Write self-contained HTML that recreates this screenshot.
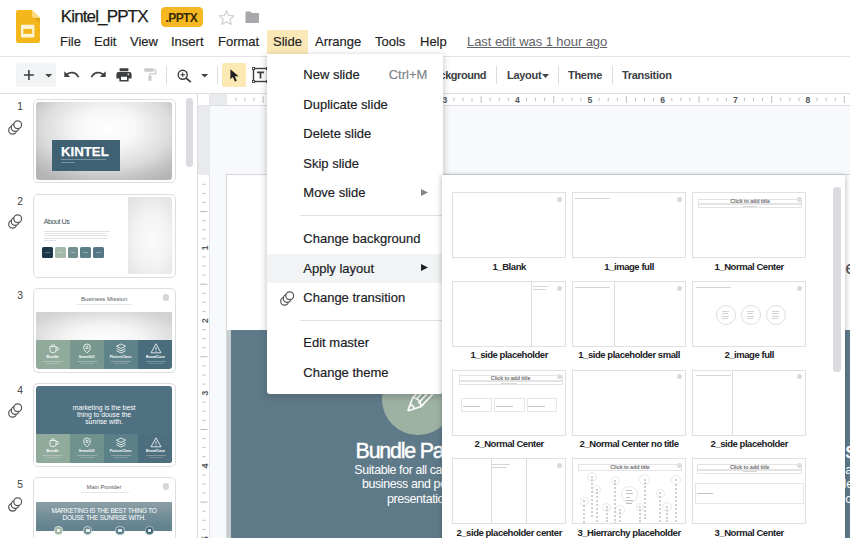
<!DOCTYPE html>
<html>
<head>
<meta charset="utf-8">
<title>Kintel_PPTX - Google Slides</title>
<style>
*{box-sizing:border-box;margin:0;padding:0}
html,body{width:850px;height:538px;overflow:hidden;background:#fff}
body{font-family:"Liberation Sans",sans-serif;color:#202124;position:relative}
.abs{position:absolute}
.t{position:absolute;white-space:nowrap;line-height:1}
/* header */
#title{left:60.8px;top:7.6px;font-size:17px;color:#1b1b1b;letter-spacing:-0.87px;-webkit-text-stroke:.25px #1b1b1b}
#badge{left:161px;top:7.3px;width:42px;height:19.5px;background:#f5b822;border-radius:4.2px}
#badge span{left:4.6px;top:4.8px;font-size:12px;font-weight:bold;color:#3a2a02;letter-spacing:-0.63px}
.mb{font-size:13px;top:35px;color:#1f1f1f;letter-spacing:0;-webkit-text-stroke:.18px #1f1f1f}
#slidehl{left:267px;top:30px;width:41px;height:24px;background:#fbe8b7}
#lastedit{left:467px;top:35px;font-size:13px;color:#5f6368;text-decoration:underline;letter-spacing:-0.06px}
#hline1{left:0;top:56px;width:850px;height:1px;background:#e3e4e6}
#hline2{left:0;top:93px;width:850px;height:1px;background:#dcdee1}
/* toolbar */
#plusbg{left:16px;top:63px;width:40px;height:24px;background:#f1f3f4;border-radius:2px}
#curbg{left:222px;top:63px;width:24px;height:24px;background:#fce8b2;border-radius:2px}
.tb{font-size:11px;font-weight:bold;top:69.5px;color:#3c4043;letter-spacing:-0.3px}
.vsep{width:1px;height:18px;top:66px;background:#dadce0}
/* filmstrip */
#film{left:0;top:94px;width:197px;height:444px;background:#fff}
#filmborder{left:197px;top:94px;width:1px;height:444px;background:#dadce0}
.num{font-size:10.3px;color:#3c4043;left:11px;width:12px;text-align:right}
.thumb{left:32.8px;width:142.8px;height:84.2px;border:1.4px solid #dcdee1;border-radius:5px;background:#fff;overflow:hidden}
.thumb .in{position:absolute;left:1.8px;top:2.1px;width:136.6px;height:77.3px;border-radius:3px;overflow:hidden}
#fscroll{left:186px;top:97.5px;width:7px;height:69.5px;background:#dadce0;border-radius:4px}
/* canvas */
#canvas{left:198px;top:94px;width:652px;height:444px;background:#f8f9fa}
#slide{left:227px;top:175.3px;width:640px;height:380px;background:#fff;box-shadow:0 0 0 1px #d6d8db;overflow:hidden}
#slideimg{left:0;top:154.7px;width:640px;height:230px;background:#5e7988;border-left:4px solid #c8cdcf}
#hruler{left:198px;top:93px;width:652px;height:13px;background:#fff;border-top:1px solid #dcdee1;border-bottom:1px solid #dcdee1}
#hrgrey{left:210px;top:94px;width:17px;height:11px;background:#e8eaed}
#vruler{left:198px;top:94px;width:12px;height:444px;background:#fff;border-right:1px solid #e3e5e8}
#vrgrey{left:198px;top:106px;width:11px;height:69.3px;background:#e8eaed}
#rcorner{left:198px;top:94px;width:12px;height:11.5px;background:#fff;border-right:1px solid #e3e5e8;border-bottom:1px solid #e3e5e8}
/* menu */
#menu{left:267px;top:54px;width:176px;height:340px;background:#fff;box-shadow:0 2px 6px 1px rgba(60,64,67,.28);border-radius:0 0 3px 3px}
.mi{font-size:13px;color:#202124;left:36.3px;letter-spacing:0;-webkit-text-stroke:.18px currentColor}
.msep{left:8px;width:168px;height:1px;background:#e1e3e6}
#sub{left:442.2px;top:175.3px;width:402.8px;height:380px;background:#fff;box-shadow:0 1px 5px 1px rgba(60,64,67,.3);border-radius:2px;overflow:hidden}
.lay{width:114.3px;height:65.8px;border:1px solid #e0e0e0;background:#fff;overflow:hidden}
.ll{font-size:9.5px;font-weight:bold;color:#202124;text-align:center;width:140px;letter-spacing:-0.45px}
</style>
</head>
<body>

<!-- ============ HEADER ============ -->
<svg class="abs" style="left:15.8px;top:10.1px" width="24" height="33" viewBox="0 0 24 33">
  <path d="M2.2 0 H16 L24 8 V30.8 a2.2 2.2 0 0 1 -2.2 2.2 H2.2 a2.2 2.2 0 0 1 -2.2 -2.2 V2.2 a2.2 2.2 0 0 1 2.2 -2.2z" fill="#f4b71b"/>
  <path d="M16.4 7.6 L24 12.4 V8z" fill="#d9a013" opacity=".75"/>
  <path d="M16 0 L24 8 H18 a2 2 0 0 1 -2 -2z" fill="#f9da80"/>
  <rect x="5" y="14.7" width="13.4" height="12.9" rx=".8" fill="#fdf4d6"/>
  <rect x="7.3" y="18.9" width="8.9" height="4.9" fill="#f4b71b"/>
</svg>
<div class="t" id="title">Kintel_PPTX</div>
<div class="abs" id="badge"><span class="t">.PPTX</span></div>
<svg class="abs" style="left:216.6px;top:7.8px" width="19.2" height="19.2" viewBox="0 0 24 24"><path d="M12 3.2l2.7 6 6.5.6-4.9 4.3 1.5 6.4L12 17.1l-5.8 3.4 1.5-6.4-4.9-4.3 6.5-.6z" fill="none" stroke="#cfd1d3" stroke-width="1.5" stroke-linejoin="round"/></svg>
<svg class="abs" style="left:244.9px;top:11.3px" width="14.5" height="12.4" viewBox="0 0 16 13" preserveAspectRatio="none"><path d="M1.5 0.5 H6 L7.6 2.2 H14.5 a1 1 0 0 1 1 1 V11.5 a1 1 0 0 1 -1 1 H1.5 a1 1 0 0 1 -1 -1 V1.5 a1 1 0 0 1 1 -1z" fill="#a6a8ab"/></svg>

<div class="abs" id="slidehl"></div>
<div class="t mb" style="left:60px">File</div>
<div class="t mb" style="left:94px">Edit</div>
<div class="t mb" style="left:130px">View</div>
<div class="t mb" style="left:171px">Insert</div>
<div class="t mb" style="left:218px">Format</div>
<div class="t mb" style="left:273px">Slide</div>
<div class="t mb" style="left:315px">Arrange</div>
<div class="t mb" style="left:375px">Tools</div>
<div class="t mb" style="left:420px">Help</div>
<div class="t" id="lastedit">Last edit was 1 hour ago</div>
<div class="abs" id="hline1"></div>

<!-- ============ TOOLBAR ============ -->
<div id="toolbar">
<div class="abs" id="plusbg"></div>
<div class="abs" id="curbg"></div>
<!-- plus -->
<svg class="abs" style="left:23px;top:69px" width="12" height="12" viewBox="0 0 12 12"><path d="M5.9 1 V10.9 M.9 6 H10.8" stroke="#3c4043" stroke-width="1.6" fill="none"/></svg>
<svg class="abs" style="left:45.3px;top:74.1px" width="7.4" height="3.6" viewBox="0 0 8 4"><path d="M0 0 H8 L4 4z" fill="#444746"/></svg>
<!-- undo -->
<svg class="abs" style="left:64px;top:70px" width="16" height="10" viewBox="0 0 16 10"><path d="M0.3 1.2 V7 H6.1 L3.9 4.8 C5 3.9 6.4 3.4 7.9 3.4 C10.6 3.4 12.9 5.1 13.7 7.6 L15.3 7.1 C14.3 3.9 11.4 1.7 7.9 1.7 C5.9 1.7 4.1 2.4 2.7 3.6z" fill="#3c4043"/></svg>
<!-- redo -->
<svg class="abs" style="left:90px;top:70px" width="16" height="10" viewBox="0 0 16 10"><path d="M15.7 1.2 V7 H9.9 L12.1 4.8 C11 3.9 9.6 3.4 8.1 3.4 C5.4 3.4 3.1 5.1 2.3 7.6 L0.7 7.1 C1.7 3.9 4.6 1.7 8.1 1.7 C10.1 1.7 11.9 2.4 13.3 3.6z" fill="#3c4043"/></svg>
<!-- print -->
<svg class="abs" style="left:116px;top:68px" width="16" height="14" viewBox="0 0 16 14"><path d="M3.6 0.3 H12.4 V3.2 H3.6z M2.6 4 H13.4 A2.2 2.2 0 0 1 15.6 6.2 V10.6 H12.6 V13.6 H3.4 V10.6 H0.4 V6.2 A2.2 2.2 0 0 1 2.6 4z M5 8.8 V12.1 H11 V8.8z M12.3 5.4 a.8 .8 0 1 0 0.01 0z" fill="#3c4043" fill-rule="evenodd"/></svg>
<!-- paint format (disabled) -->
<svg class="abs" style="left:144px;top:68px" width="13" height="13" viewBox="0 0 13 13"><path d="M0.3 0.2 H9.6 V3.8 H0.3z M9.6 1.3 H12.3 V6.6 H6.6 V8 H7.6 V12.8 H4.4 V8 H5.3 V5.3 H11 V2.6 H9.6z" fill="#c9cbce"/></svg>
<div class="abs vsep" style="left:166px"></div>
<!-- zoom -->
<svg class="abs" style="left:177px;top:69px" width="15" height="14" viewBox="0 0 15 14"><circle cx="5.7" cy="5.7" r="4.5" fill="none" stroke="#3c4043" stroke-width="1.4"/><path d="M9 9 L13.8 13.2" stroke="#3c4043" stroke-width="1.7" fill="none"/><path d="M5.7 3.4 V8 M3.4 5.7 H8" stroke="#3c4043" stroke-width="1.1" fill="none"/></svg>
<svg class="abs" style="left:201.2px;top:74.1px" width="7.4" height="3.6" viewBox="0 0 8 4"><path d="M0 0 H8 L4 4z" fill="#444746"/></svg>
<div class="abs vsep" style="left:217px"></div>
<!-- cursor -->
<svg class="abs" style="left:230px;top:69px" width="10" height="13" viewBox="0 0 10 13"><path d="M0.4 0.2 V10.3 L2.9 7.9 L4.9 12.6 L6.8 11.8 L4.8 7.2 H8.6z" fill="#1f1f1f"/></svg>
<!-- textbox -->
<svg class="abs" style="left:252px;top:67px" width="17" height="16" viewBox="0 0 17 16"><rect x="1.5" y="1.5" width="14" height="13" fill="#fff" stroke="#3c4043" stroke-width="1.4"/><path d="M5 4.6 H12 V6.2 H9.4 V11.6 H7.6 V6.2 H5z" fill="#3c4043"/><g fill="#fff" stroke="#3c4043" stroke-width=".9"><rect x=".4" y=".4" width="2.2" height="2.2"/><rect x="14.4" y=".4" width="2.2" height="2.2"/><rect x=".4" y="13.4" width="2.2" height="2.2"/><rect x="14.4" y="13.4" width="2.2" height="2.2"/></g></svg>
<!-- right side buttons -->
<div class="t tb" style="left:426.3px;letter-spacing:-0.45px">Background</div>
<div class="abs vsep" style="left:496px"></div>
<div class="t tb" style="left:507px">Layout</div>
<svg class="abs" style="left:542px;top:74px" width="7" height="4" viewBox="0 0 7 4"><path d="M0 0 H7 L3.5 4z" fill="#444746"/></svg>
<div class="abs vsep" style="left:558px"></div>
<div class="t tb" style="left:568px">Theme</div>
<div class="abs vsep" style="left:612px"></div>
<div class="t tb" style="left:622px">Transition</div>
</div>
<div class="abs" id="hline2"></div>

<!-- ============ FILMSTRIP ============ -->
<div class="abs" id="film">
<div class="t num" style="top:7.9px">1</div>
<svg class="abs" style="left:7.7px;top:26.1px" width="15" height="15" viewBox="0 0 15 15"><g fill="#fff" stroke="#55585b" stroke-width="1.25"><circle cx="4.6" cy="10.2" r="3.9"/><circle cx="7.15" cy="7.5" r="3.9"/><circle cx="9.7" cy="4.8" r="3.9"/></g></svg>
<div class="t num" style="top:102.5px">2</div>
<svg class="abs" style="left:7.7px;top:120.2px" width="15" height="15" viewBox="0 0 15 15"><g fill="#fff" stroke="#55585b" stroke-width="1.25"><circle cx="4.6" cy="10.2" r="3.9"/><circle cx="7.15" cy="7.5" r="3.9"/><circle cx="9.7" cy="4.8" r="3.9"/></g></svg>
<div class="t num" style="top:197.0px">3</div>
<div class="t num" style="top:291.6px">4</div>
<svg class="abs" style="left:7.7px;top:309.2px" width="15" height="15" viewBox="0 0 15 15"><g fill="#fff" stroke="#55585b" stroke-width="1.25"><circle cx="4.6" cy="10.2" r="3.9"/><circle cx="7.15" cy="7.5" r="3.9"/><circle cx="9.7" cy="4.8" r="3.9"/></g></svg>
<div class="t num" style="top:385.5px">5</div>
<svg class="abs" style="left:7.7px;top:403.2px" width="15" height="15" viewBox="0 0 15 15"><g fill="#fff" stroke="#55585b" stroke-width="1.25"><circle cx="4.6" cy="10.2" r="3.9"/><circle cx="7.15" cy="7.5" r="3.9"/><circle cx="9.7" cy="4.8" r="3.9"/></g></svg>
<div class="abs thumb" style="top:5.299999999999997px"><div class="in" style="background:radial-gradient(ellipse 72% 78% at 52% 34%,#ffffff 0%,#f7f7f7 30%,#dcdcdc 65%,#c2c2c2 85%,#b4b4b4 100%)"><div class="abs" style="left:16.9px;top:37.9px;width:67.8px;height:30.3px;background:#3e6174"></div><div class="t" style="left:25.3px;top:42.2px;font-size:13.2px;font-weight:bold;color:#fff;letter-spacing:0.05px;-webkit-text-stroke:.25px #fff">KINTEL</div><div class="abs" style="left:25.6px;top:56.8px;width:45px;height:.8px;background:rgba(255,255,255,.32)"></div><div class="abs" style="left:25.6px;top:59.2px;width:14px;height:.8px;background:rgba(255,255,255,.32)"></div></div></div>
<div class="abs thumb" style="top:99.9px"><div class="in" style="background:#fff"><div class="abs" style="left:92.2px;top:0;width:44.4px;height:78px;background:radial-gradient(ellipse 75% 65% at 55% 55%,#fbfbfb 0%,#f3f3f3 50%,#e4e3e3 100%)"></div><div class="t" style="left:8.2px;top:20.6px;font-size:7.2px;color:#3b4a55;letter-spacing:-0.5px">About Us</div><div class="abs" style="left:8.2px;top:33.60px;width:66px;height:.8px;background:#e1e3e6"></div><div class="abs" style="left:8.2px;top:36.05px;width:62px;height:.8px;background:#e1e3e6"></div><div class="abs" style="left:8.2px;top:38.50px;width:64px;height:.8px;background:#e1e3e6"></div><div class="abs" style="left:8.2px;top:40.95px;width:63px;height:.8px;background:#e1e3e6"></div><div class="abs" style="left:8.2px;top:43.40px;width:12px;height:.8px;background:#e1e3e6"></div><div class="abs" style="left:6.8px;top:50.4px;width:10.8px;height:10.6px;border-radius:1.5px;background:#1d3949"></div><div class="abs" style="left:9.8px;top:55px;width:4.8px;height:.7px;background:rgba(255,255,255,.3)"></div><div class="abs" style="left:19.4px;top:50.4px;width:10.8px;height:10.6px;border-radius:1.5px;background:#a4b9a9"></div><div class="abs" style="left:22.4px;top:55px;width:4.8px;height:.7px;background:rgba(255,255,255,.3)"></div><div class="abs" style="left:32.0px;top:50.4px;width:10.8px;height:10.6px;border-radius:1.5px;background:#708f8e"></div><div class="abs" style="left:35.0px;top:55px;width:4.8px;height:.7px;background:rgba(255,255,255,.3)"></div><div class="abs" style="left:44.6px;top:50.4px;width:10.8px;height:10.6px;border-radius:1.5px;background:#5b8088"></div><div class="abs" style="left:47.6px;top:55px;width:4.8px;height:.7px;background:rgba(255,255,255,.3)"></div><div class="abs" style="left:57.2px;top:50.4px;width:10.8px;height:10.6px;border-radius:1.5px;background:#557786"></div><div class="abs" style="left:60.2px;top:55px;width:4.8px;height:.7px;background:rgba(255,255,255,.3)"></div></div></div>
<div class="abs thumb" style="top:194.39999999999998px"><div class="in" style="background:#fff"><div class="t" style="left:0;width:137px;text-align:center;top:4.9px;font-size:6px;color:#5a5a5a;letter-spacing:0">Business Mission</div><div class="abs" style="left:41.6px;top:12.8px;width:55px;height:.7px;background:#e6e6e6"></div><div class="abs" style="left:127px;top:2.4px;width:6.8px;height:6.8px;border-radius:50%;background:#d6d6d6"></div><div class="abs" style="left:0;top:20.5px;width:137px;height:28.4px;background:radial-gradient(ellipse 62% 120% at 50% 100%,#ffffff 0%,#f4f4f4 45%,#d2d2d2 100%)"></div><div class="abs" style="left:0px;top:48.7px;width:34.4px;height:29.5px;background:#90aa9b"></div>
<div class="abs" style="left:34.1px;top:48.7px;width:34.4px;height:29.5px;background:#78988f"></div>
<div class="abs" style="left:68.2px;top:48.7px;width:34.9px;height:29.5px;background:#5f838a"></div>
<div class="abs" style="left:102.8px;top:48.7px;width:34.0px;height:29.5px;background:#4a6d7e"></div>
<svg class="abs" style="left:0;top:48.7px" width="137" height="28" viewBox="0 0 137 28" fill="none" stroke="#fff" stroke-width=".8"><path d="M14 6.5 h6 v4 a2 2 0 0 1 -2 2 h-2 a2 2 0 0 1 -2 -2z M20 7.5 h1.3 a1.3 1.3 0 0 1 0 2.6 H20 M15 5 h4"/><path d="M51 4 a3.4 3.4 0 0 1 3.4 3.4 c0 2.4 -3.4 5.6 -3.4 5.6 s-3.4 -3.2 -3.4 -5.6 A3.4 3.4 0 0 1 51 4z"/><circle cx="51" cy="7.4" r="1.2"/><path d="M85 4 l4.5 2.2 l-4.5 2.2 l-4.5 -2.2z M80.5 8.6 l4.5 2.2 l4.5 -2.2 M80.5 10.8 l4.5 2.2 l4.5 -2.2"/><path d="M120 3.8 l5 9 h-10z M120 7 v3.2 M120 11 v.8"/></svg>
<div class="t" style="left:-3px;width:40px;text-align:center;top:64.2px;font-size:3.6px;font-weight:bold;color:#fff">Bundle</div>
<div class="abs" style="left:7px;width:20px;top:69.2px;height:.6px;background:rgba(255,255,255,.28)"></div>
<div class="abs" style="left:10px;width:14px;top:71.2px;height:.6px;background:rgba(255,255,255,.2)"></div>
<div class="t" style="left:31px;width:40px;text-align:center;top:64.2px;font-size:3.6px;font-weight:bold;color:#fff">SearchUI</div>
<div class="abs" style="left:41px;width:20px;top:69.2px;height:.6px;background:rgba(255,255,255,.28)"></div>
<div class="abs" style="left:44px;width:14px;top:71.2px;height:.6px;background:rgba(255,255,255,.2)"></div>
<div class="t" style="left:65px;width:40px;text-align:center;top:64.2px;font-size:3.6px;font-weight:bold;color:#fff">PictureClass</div>
<div class="abs" style="left:75px;width:20px;top:69.2px;height:.6px;background:rgba(255,255,255,.28)"></div>
<div class="abs" style="left:78px;width:14px;top:71.2px;height:.6px;background:rgba(255,255,255,.2)"></div>
<div class="t" style="left:100px;width:40px;text-align:center;top:64.2px;font-size:3.6px;font-weight:bold;color:#fff">BroadCase</div>
<div class="abs" style="left:110px;width:20px;top:69.2px;height:.6px;background:rgba(255,255,255,.28)"></div>
<div class="abs" style="left:113px;width:14px;top:71.2px;height:.6px;background:rgba(255,255,255,.2)"></div>
</div></div>
<div class="abs thumb" style="top:289.0px"><div class="in" style="background:#4f7182"><div class="t" style="left:0;width:137px;text-align:center;top:19.0px;font-size:6.8px;color:#fff;letter-spacing:0px">marketing is the best</div><div class="t" style="left:0;width:137px;text-align:center;top:25.8px;font-size:6.8px;color:#fff;letter-spacing:0px">thing to douse the</div><div class="t" style="left:0;width:137px;text-align:center;top:32.5px;font-size:6.8px;color:#fff;letter-spacing:0px">sunrise with.</div><div class="abs" style="left:0px;top:48.2px;width:34.4px;height:30px;background:#90aa9b"></div>
<div class="abs" style="left:34.1px;top:48.2px;width:34.4px;height:30px;background:#70928f"></div>
<div class="abs" style="left:68.2px;top:48.2px;width:34.9px;height:30px;background:#5c8088"></div>
<div class="abs" style="left:102.8px;top:48.2px;width:34.0px;height:30px;background:#4c6e7f"></div>
<svg class="abs" style="left:0;top:48.2px" width="137" height="28" viewBox="0 0 137 28" fill="none" stroke="#fff" stroke-width=".8"><path d="M14 6.5 h6 v4 a2 2 0 0 1 -2 2 h-2 a2 2 0 0 1 -2 -2z M20 7.5 h1.3 a1.3 1.3 0 0 1 0 2.6 H20 M15 5 h4"/><path d="M51 4 a3.4 3.4 0 0 1 3.4 3.4 c0 2.4 -3.4 5.6 -3.4 5.6 s-3.4 -3.2 -3.4 -5.6 A3.4 3.4 0 0 1 51 4z"/><circle cx="51" cy="7.4" r="1.2"/><path d="M85 4 l4.5 2.2 l-4.5 2.2 l-4.5 -2.2z M80.5 8.6 l4.5 2.2 l4.5 -2.2 M80.5 10.8 l4.5 2.2 l4.5 -2.2"/><path d="M120 3.8 l5 9 h-10z M120 7 v3.2 M120 11 v.8"/></svg>
<div class="t" style="left:-3px;width:40px;text-align:center;top:63.7px;font-size:3.6px;font-weight:bold;color:#fff">Bundle</div>
<div class="abs" style="left:7px;width:20px;top:68.7px;height:.6px;background:rgba(255,255,255,.28)"></div>
<div class="abs" style="left:10px;width:14px;top:70.7px;height:.6px;background:rgba(255,255,255,.2)"></div>
<div class="t" style="left:31px;width:40px;text-align:center;top:63.7px;font-size:3.6px;font-weight:bold;color:#fff">SearchUI</div>
<div class="abs" style="left:41px;width:20px;top:68.7px;height:.6px;background:rgba(255,255,255,.28)"></div>
<div class="abs" style="left:44px;width:14px;top:70.7px;height:.6px;background:rgba(255,255,255,.2)"></div>
<div class="t" style="left:65px;width:40px;text-align:center;top:63.7px;font-size:3.6px;font-weight:bold;color:#fff">PictureClass</div>
<div class="abs" style="left:75px;width:20px;top:68.7px;height:.6px;background:rgba(255,255,255,.28)"></div>
<div class="abs" style="left:78px;width:14px;top:70.7px;height:.6px;background:rgba(255,255,255,.2)"></div>
<div class="t" style="left:100px;width:40px;text-align:center;top:63.7px;font-size:3.6px;font-weight:bold;color:#fff">BroadCase</div>
<div class="abs" style="left:110px;width:20px;top:68.7px;height:.6px;background:rgba(255,255,255,.28)"></div>
<div class="abs" style="left:113px;width:14px;top:70.7px;height:.6px;background:rgba(255,255,255,.2)"></div>
</div></div>
<div class="abs thumb" style="top:382.9px"><div class="in" style="background:#fff"><div class="t" style="left:0;width:137px;text-align:center;top:5.3px;font-size:5.6px;color:#555;letter-spacing:0">Main Provider</div><div class="abs" style="left:45px;top:12px;width:48px;height:.7px;background:#e6e6e6"></div><div class="abs" style="left:127px;top:2.8px;width:6.8px;height:6.8px;border-radius:50%;background:#d6d6d6"></div><div class="abs" style="left:0;top:22.3px;width:137px;height:29.2px;background:linear-gradient(#8da0a7,#6f8b97 55%,#5f808d)"></div><div class="t" style="left:0;width:137px;text-align:center;top:28.3px;font-size:6.5px;color:#fff;letter-spacing:-0.25px">MARKETING IS THE BEST THING TO</div><div class="t" style="left:0;width:137px;text-align:center;top:35.1px;font-size:6.5px;color:#fff;letter-spacing:-0.25px">DOUSE THE SUNRISE WITH.</div><div class="abs" style="left:18.1px;top:45.9px;width:9.4px;height:9.4px;border-radius:50%;background:#9db6a2;border:.6px solid rgba(255,255,255,.5)"></div><div class="abs" style="left:21.0px;top:49px;width:3.6px;height:3px;border-radius:.6px;background:rgba(255,255,255,.85)"></div><div class="abs" style="left:47.5px;top:45.9px;width:9.4px;height:9.4px;border-radius:50%;background:#708f8f;border:.6px solid rgba(255,255,255,.5)"></div><div class="abs" style="left:50.4px;top:49px;width:3.6px;height:3px;border-radius:.6px;background:rgba(255,255,255,.85)"></div><div class="abs" style="left:79.8px;top:45.9px;width:9.4px;height:9.4px;border-radius:50%;background:#587d89;border:.6px solid rgba(255,255,255,.5)"></div><div class="abs" style="left:82.7px;top:49px;width:3.6px;height:3px;border-radius:.6px;background:rgba(255,255,255,.85)"></div><div class="abs" style="left:109.2px;top:45.9px;width:9.4px;height:9.4px;border-radius:50%;background:#3f6577;border:.6px solid rgba(255,255,255,.5)"></div><div class="abs" style="left:112.1px;top:49px;width:3.6px;height:3px;border-radius:.6px;background:rgba(255,255,255,.85)"></div></div></div>
</div>
<div class="abs" id="filmborder"></div>
<div class="abs" id="fscroll"></div>

<!-- ============ CANVAS ============ -->
<div class="abs" id="canvas"></div>
<div class="abs" id="slide"><div class="abs" id="slideimg"></div>
<div class="abs" style="left:155.2px;top:188.3px;width:71.6px;height:71.6px;border-radius:50%;background:#9db2a2"></div>
<svg class="abs" style="left:173px;top:209.7px" width="50" height="30" viewBox="400 385 50 30" fill="none" stroke="#fff" stroke-width="1.55" stroke-linejoin="round" stroke-linecap="round"><path d="M433.3 375.7 L412.8 397.6 L408.3 409.40000000000003 Q407.7 410.90000000000003 409.4 410.5 L421 406.6 L441.5 384.7 M412.8 397.6 Q420.5 398.6 421 406.6 M410.2 404.8 Q413.4 405.4 414.4 408.8 M416.4 399.0 L436.9 377.1 M418.9 402.6 L439.4 380.7"/></svg>
<div class="t" style="left:128.6px;top:265.8px;font-size:21.4px;color:#fff;-webkit-text-stroke:.45px #fff;letter-spacing:-1.2px">Bundle Package</div>
<div class="t" style="left:127.3px;top:288.4px;font-size:12.4px;color:#fff;letter-spacing:-0.38px">Suitable for all category</div>
<div class="t" style="left:135.0px;top:303.0px;font-size:12.4px;color:#fff;letter-spacing:-0.38px">business and personal</div>
<div class="t" style="left:160.0px;top:317.6px;font-size:12.4px;color:#fff;letter-spacing:-0.38px">presentation</div>
</div>
<div class="abs" id="hruler"></div>
<div class="abs" id="hrgrey"></div>
<div class="abs" id="vruler"></div>
<div class="abs" id="vrgrey"></div>
<div class="abs" id="rcorner"></div>
<svg class="abs" style="left:0;top:93px" width="850" height="13" viewBox="0 0 850 13"><g stroke="#b9bcc0" stroke-width="1"><path d="M235.9 4.8 V8.2"/><path d="M245.0 4.8 V8.2"/><path d="M254.0 4.8 V8.2"/><path d="M263.1 3.2 V9.8"/><path d="M272.2 4.8 V8.2"/><path d="M281.3 4.8 V8.2"/><path d="M290.4 4.8 V8.2"/><path d="M308.5 4.8 V8.2"/><path d="M317.6 4.8 V8.2"/><path d="M326.7 4.8 V8.2"/><path d="M335.8 3.2 V9.8"/><path d="M344.9 4.8 V8.2"/><path d="M353.9 4.8 V8.2"/><path d="M363.0 4.8 V8.2"/><path d="M381.2 4.8 V8.2"/><path d="M390.3 4.8 V8.2"/><path d="M399.3 4.8 V8.2"/><path d="M408.4 3.2 V9.8"/><path d="M417.5 4.8 V8.2"/><path d="M426.6 4.8 V8.2"/><path d="M435.7 4.8 V8.2"/><path d="M453.8 4.8 V8.2"/><path d="M462.9 4.8 V8.2"/><path d="M472.0 4.8 V8.2"/><path d="M481.1 3.2 V9.8"/><path d="M490.2 4.8 V8.2"/><path d="M499.2 4.8 V8.2"/><path d="M508.3 4.8 V8.2"/><path d="M526.5 4.8 V8.2"/><path d="M535.6 4.8 V8.2"/><path d="M544.6 4.8 V8.2"/><path d="M553.7 3.2 V9.8"/><path d="M562.8 4.8 V8.2"/><path d="M571.9 4.8 V8.2"/><path d="M581.0 4.8 V8.2"/><path d="M599.1 4.8 V8.2"/><path d="M608.2 4.8 V8.2"/><path d="M617.3 4.8 V8.2"/><path d="M626.4 3.2 V9.8"/><path d="M635.5 4.8 V8.2"/><path d="M644.5 4.8 V8.2"/><path d="M653.6 4.8 V8.2"/><path d="M671.8 4.8 V8.2"/><path d="M680.9 4.8 V8.2"/><path d="M689.9 4.8 V8.2"/><path d="M699.0 3.2 V9.8"/><path d="M708.1 4.8 V8.2"/><path d="M717.2 4.8 V8.2"/><path d="M726.3 4.8 V8.2"/><path d="M744.4 4.8 V8.2"/><path d="M753.5 4.8 V8.2"/><path d="M762.6 4.8 V8.2"/><path d="M771.7 3.2 V9.8"/><path d="M780.8 4.8 V8.2"/><path d="M789.8 4.8 V8.2"/><path d="M798.9 4.8 V8.2"/><path d="M817.1 4.8 V8.2"/><path d="M826.2 4.8 V8.2"/><path d="M835.2 4.8 V8.2"/><path d="M844.3 3.2 V9.8"/></g><g font-family="Liberation Sans" font-size="8.6" font-weight="bold" fill="#55585c" text-anchor="middle"><text x="299.5" y="9.7">1</text><text x="372.1" y="9.7">2</text><text x="444.8" y="9.7">3</text><text x="517.4" y="9.7">4</text><text x="590.0" y="9.7">5</text><text x="662.7" y="9.7">6</text><text x="735.4" y="9.7">7</text><text x="808.0" y="9.7">8</text></g></svg>
<svg class="abs" style="left:198px;top:0" width="12" height="538" viewBox="0 0 12 538"><g stroke="#b9bcc0" stroke-width="1"><path d="M4.3 184.3 H7.3"/><path d="M4.3 193.4 H7.3"/><path d="M4.3 202.4 H7.3"/><path d="M2.2 211.5 H9.4"/><path d="M4.3 220.6 H7.3"/><path d="M4.3 229.7 H7.3"/><path d="M4.3 238.8 H7.3"/><path d="M4.3 256.9 H7.3"/><path d="M4.3 266.0 H7.3"/><path d="M4.3 275.1 H7.3"/><path d="M2.2 284.2 H9.4"/><path d="M4.3 293.3 H7.3"/><path d="M4.3 302.3 H7.3"/><path d="M4.3 311.4 H7.3"/><path d="M4.3 329.6 H7.3"/><path d="M4.3 338.7 H7.3"/><path d="M4.3 347.7 H7.3"/><path d="M2.2 356.8 H9.4"/><path d="M4.3 365.9 H7.3"/><path d="M4.3 375.0 H7.3"/><path d="M4.3 384.1 H7.3"/><path d="M4.3 402.2 H7.3"/><path d="M4.3 411.3 H7.3"/><path d="M4.3 420.4 H7.3"/><path d="M2.2 429.5 H9.4"/><path d="M4.3 438.6 H7.3"/><path d="M4.3 447.6 H7.3"/><path d="M4.3 456.7 H7.3"/><path d="M4.3 474.9 H7.3"/><path d="M4.3 484.0 H7.3"/><path d="M4.3 493.0 H7.3"/><path d="M2.2 502.1 H9.4"/><path d="M4.3 511.2 H7.3"/><path d="M4.3 520.3 H7.3"/><path d="M4.3 529.4 H7.3"/></g><g font-family="Liberation Sans" font-size="8.6" font-weight="bold" fill="#55585c" text-anchor="middle"><text transform="translate(9.5 247.8) rotate(-90)" x="0" y="0">1</text><text transform="translate(9.5 320.5) rotate(-90)" x="0" y="0">2</text><text transform="translate(9.5 393.1) rotate(-90)" x="0" y="0">3</text><text transform="translate(9.5 465.8) rotate(-90)" x="0" y="0">4</text><text transform="translate(9.5 538.5) rotate(-90)" x="0" y="0">5</text></g></svg>

<!-- ============ MENU ============ -->
<div class="abs" id="menu">
<div class="abs" style="left:0;top:199.5px;width:176px;height:29px;background:#f1f3f4"></div>
<div class="t mi" style="top:14.3px">New slide</div>
<div class="t mi" style="top:43.8px">Duplicate slide</div>
<div class="t mi" style="top:73.3px">Delete slide</div>
<div class="t mi" style="top:102.8px">Skip slide</div>
<div class="t mi" style="top:132.3px">Move slide</div>
<div class="t mi" style="top:178.0px">Change background</div>
<div class="t mi" style="top:207.5px">Apply layout</div>
<div class="t mi" style="top:237.0px">Change transition</div>
<div class="t mi" style="top:282.1px">Edit master</div>
<div class="t mi" style="top:311.6px">Change theme</div>
<div class="t mi" style="left:121.7px;top:14.3px;color:#80868b">Ctrl+M</div>
<div class="abs msep" style="left:33px;width:143px;top:161px"></div>
<div class="abs msep" style="left:33px;width:143px;top:265.5px"></div>
<svg class="abs" style="left:153.5px;top:135.3px" width="7" height="7" viewBox="0 0 7 7"><path d="M0 0 L7 3.5 L0 7z" fill="#80868b"/></svg>
<svg class="abs" style="left:153.5px;top:210.3px" width="7" height="7" viewBox="0 0 7 7"><path d="M0 0 L7 3.5 L0 7z" fill="#202124"/></svg>
<svg class="abs" style="left:13px;top:236.5px" width="15" height="15" viewBox="0 0 15 15"><g fill="#fff" stroke="#55585b" stroke-width="1.25"><circle cx="4.6" cy="10.2" r="3.9"/><circle cx="7.15" cy="7.5" r="3.9"/><circle cx="9.7" cy="4.8" r="3.9"/></g></svg>
</div>
<div class="abs" id="sub">
<div class="abs lay" style="left:9.9px;top:17.1px"><div class="abs" style="left:104.1px;top:3.6px;width:5px;height:5px;border-radius:50%;background:#d9d9d9"></div></div>
<div class="t ll" style="left:-3.0px;top:86.5px">1_Blank</div>
<div class="abs lay" style="left:129.7px;top:17.1px"><div class="abs" style="left:104.1px;top:3.6px;width:5px;height:5px;border-radius:50%;background:#d9d9d9"></div><div class="abs" style="left:2.2px;top:4.6px;width:35.0px;height:0.9px;background:#d6d6d6"></div></div>
<div class="t ll" style="left:116.9px;top:86.5px">1_image full</div>
<div class="abs lay" style="left:249.9px;top:17.1px"><div class="abs" style="left:104.1px;top:3.6px;width:5px;height:5px;border-radius:50%;background:#d9d9d9"></div><div class="abs" style="left:5.0px;top:5.6px;width:104.0px;height:5.4px;border:.7px solid #e3e3e3"></div><div class="abs" style="left:5.0px;top:11.0px;width:104.0px;height:3.4px;border:.7px solid #e3e3e3"></div><div class="t" style="left:5.0px;top:5.9px;width:104.0px;text-align:center;font-size:5.4px;color:#707070;font-weight:bold;letter-spacing:-0.12px">Click to add title</div><div class="abs" style="left:50.0px;top:12.4px;width:14.0px;height:0.7px;background:#d8d8d8"></div></div>
<div class="t ll" style="left:237.0px;top:86.5px">1_Normal Center</div>
<div class="abs lay" style="left:9.9px;top:105.8px"><div class="abs" style="left:104.1px;top:3.6px;width:5px;height:5px;border-radius:50%;background:#d9d9d9"></div><div class="abs" style="left:78.2px;top:0;width:.8px;height:65.8px;background:#dcdcdc"></div><div class="abs" style="left:79.6px;top:4.2px;width:15.0px;height:0.9px;background:#d6d6d6"></div><div class="abs" style="left:79.6px;top:7.2px;width:13.0px;height:0.9px;background:#d6d6d6"></div></div>
<div class="t ll" style="left:-3.0px;top:175.2px">1_side placeholder</div>
<div class="abs lay" style="left:129.7px;top:105.8px"><div class="abs" style="left:104.1px;top:3.6px;width:5px;height:5px;border-radius:50%;background:#d9d9d9"></div><div class="abs" style="left:40.8px;top:0;width:.8px;height:65.8px;background:#dcdcdc"></div><div class="abs" style="left:2.4px;top:4.6px;width:34.5px;height:0.9px;background:#d6d6d6"></div></div>
<div class="t ll" style="left:116.9px;top:175.2px">1_side placeholder small</div>
<div class="abs lay" style="left:249.9px;top:105.8px"><div class="abs" style="left:104.1px;top:3.6px;width:5px;height:5px;border-radius:50%;background:#d9d9d9"></div><div class="abs" style="left:2.6px;top:4.6px;width:35.5px;height:0.9px;background:#d6d6d6"></div><div class="abs" style="left:22.7px;top:23.4px;width:20px;height:20px;border-radius:50%;border:.7px solid #dedede"></div><div class="abs" style="left:29.3px;top:28.6px;width:6.8px;height:0.8px;background:#d2d2d2"></div><div class="abs" style="left:29.3px;top:31.1px;width:5.6px;height:0.8px;background:#d2d2d2"></div><div class="abs" style="left:29.3px;top:33.6px;width:6.8px;height:0.8px;background:#d2d2d2"></div><div class="abs" style="left:29.3px;top:36.1px;width:5.6px;height:0.8px;background:#d2d2d2"></div><div class="abs" style="left:47.5px;top:23.4px;width:20px;height:20px;border-radius:50%;border:.7px solid #dedede"></div><div class="abs" style="left:54.1px;top:28.6px;width:6.8px;height:0.8px;background:#d2d2d2"></div><div class="abs" style="left:54.1px;top:31.1px;width:5.6px;height:0.8px;background:#d2d2d2"></div><div class="abs" style="left:54.1px;top:33.6px;width:6.8px;height:0.8px;background:#d2d2d2"></div><div class="abs" style="left:54.1px;top:36.1px;width:5.6px;height:0.8px;background:#d2d2d2"></div><div class="abs" style="left:72.8px;top:23.4px;width:20px;height:20px;border-radius:50%;border:.7px solid #dedede"></div><div class="abs" style="left:79.4px;top:28.6px;width:6.8px;height:0.8px;background:#d2d2d2"></div><div class="abs" style="left:79.4px;top:31.1px;width:5.6px;height:0.8px;background:#d2d2d2"></div><div class="abs" style="left:79.4px;top:33.6px;width:6.8px;height:0.8px;background:#d2d2d2"></div><div class="abs" style="left:79.4px;top:36.1px;width:5.6px;height:0.8px;background:#d2d2d2"></div></div>
<div class="t ll" style="left:237.0px;top:175.2px">2_image full</div>
<div class="abs lay" style="left:9.9px;top:194.5px"><div class="abs" style="left:104.1px;top:3.6px;width:5px;height:5px;border-radius:50%;background:#d9d9d9"></div><div class="abs" style="left:5.5px;top:4.1px;width:104.0px;height:6.2px;border:.7px solid #e3e3e3"></div><div class="abs" style="left:5.5px;top:10.3px;width:104.0px;height:4.2px;border:.7px solid #e3e3e3"></div><div class="t" style="left:5.5px;top:4.9px;width:104.0px;text-align:center;font-size:5.4px;color:#707070;font-weight:bold;letter-spacing:-0.12px">Click to add title</div><div class="abs" style="left:48.0px;top:11.9px;width:16.0px;height:0.7px;background:#d8d8d8"></div><div class="abs" style="left:8.3px;top:27px;width:30.4px;height:14.2px;border:.7px solid #e6e6e6"></div><div class="abs" style="left:9.8px;top:34.8px;width:17.0px;height:0.8px;background:#c8c8c8"></div><div class="abs" style="left:41.2px;top:27px;width:30.4px;height:14.2px;border:.7px solid #e6e6e6"></div><div class="abs" style="left:42.7px;top:34.8px;width:17.0px;height:0.8px;background:#c8c8c8"></div><div class="abs" style="left:73.6px;top:27px;width:30.4px;height:14.2px;border:.7px solid #e6e6e6"></div><div class="abs" style="left:75.1px;top:34.8px;width:17.0px;height:0.8px;background:#c8c8c8"></div></div>
<div class="t ll" style="left:-3.0px;top:264.1px">2_Normal Center</div>
<div class="abs lay" style="left:129.7px;top:194.5px"><div class="abs" style="left:104.1px;top:3.6px;width:5px;height:5px;border-radius:50%;background:#d9d9d9"></div></div>
<div class="t ll" style="left:116.9px;top:264.1px">2_Normal Center no title</div>
<div class="abs lay" style="left:249.9px;top:194.5px"><div class="abs" style="left:104.1px;top:3.6px;width:5px;height:5px;border-radius:50%;background:#d9d9d9"></div><div class="abs" style="left:38.5px;top:0;width:.8px;height:65.8px;background:#dcdcdc"></div><div class="abs" style="left:2.6px;top:4.4px;width:35.0px;height:0.9px;background:#d6d6d6"></div></div>
<div class="t ll" style="left:237.0px;top:264.1px">2_side placeholder</div>
<div class="abs lay" style="left:9.9px;top:283.2px"><div class="abs" style="left:104.1px;top:3.6px;width:5px;height:5px;border-radius:50%;background:#d9d9d9"></div><div class="abs" style="left:37.9px;top:0;width:.8px;height:65.8px;background:#dcdcdc"></div><div class="abs" style="left:72.6px;top:0;width:.8px;height:65.8px;background:#dcdcdc"></div><div class="abs" style="left:39.3px;top:4.6px;width:17.6px;height:0.9px;background:#d6d6d6"></div><div class="abs" style="left:39.3px;top:7.6px;width:15.0px;height:0.9px;background:#d6d6d6"></div></div>
<div class="t ll" style="left:-3.0px;top:352.6px">2_side placeholder center</div>
<div class="abs lay" style="left:129.7px;top:283.2px"><div class="abs" style="left:104.1px;top:3.6px;width:5px;height:5px;border-radius:50%;background:#d9d9d9"></div><div class="abs" style="left:4.9px;top:4.6px;width:104.4px;height:6.6px;border:.7px solid #e3e3e3"></div><div class="t" style="left:4.9px;top:5.5px;width:104.4px;text-align:center;font-size:5.4px;color:#707070;font-weight:bold;letter-spacing:-0.12px">Click to add title</div><div class="abs" style="left:14.0px;top:12.7px;width:10px;height:10px;border-radius:50%;border:.7px solid #e9e9e9"></div><div class="abs" style="left:19.4px;top:25.9px;width:9.0px;height:9.0px;border-radius:50%;border:.7px solid #e9e9e9"></div><div class="abs" style="left:6.7px;top:37.2px;width:9.0px;height:9.0px;border-radius:50%;border:.7px solid #e9e9e9"></div><div class="abs" style="left:29.3px;top:43.5px;width:9.0px;height:9.0px;border-radius:50%;border:.7px solid #e9e9e9"></div><div class="abs" style="left:37.8px;top:16.7px;width:9.0px;height:9.0px;border-radius:50%;border:.7px solid #e9e9e9"></div><div class="abs" style="left:42.2px;top:45.9px;width:10px;height:10px;border-radius:50%;border:.7px solid #e9e9e9"></div><div class="abs" style="left:66.4px;top:15.0px;width:11.0px;height:11.0px;border-radius:50%;border:.7px solid #e9e9e9"></div><div class="abs" style="left:63.0px;top:44.0px;width:8px;height:8px;border-radius:50%;border:.7px solid #e9e9e9"></div><div class="abs" style="left:83.0px;top:29.4px;width:9.0px;height:9.0px;border-radius:50%;border:.7px solid #e9e9e9"></div><div class="abs" style="left:88.8px;top:43.0px;width:10px;height:10px;border-radius:50%;border:.7px solid #e9e9e9"></div><div class="abs" style="left:98.0px;top:15.5px;width:10px;height:10px;border-radius:50%;border:.7px solid #e9e9e9"></div><div class="abs" style="left:17.9px;top:16.7px;width:0;height:40.5px;border-left:2px dotted #bdbdbd;opacity:.7"></div><div class="abs" style="left:22.8px;top:29.4px;width:0;height:33.5px;border-left:2px dotted #bdbdbd;opacity:.7"></div><div class="abs" style="left:10.1px;top:40.7px;width:0;height:22.9px;border-left:2px dotted #bdbdbd;opacity:.7"></div><div class="abs" style="left:32.7px;top:47.0px;width:0;height:15.9px;border-left:2px dotted #bdbdbd;opacity:.7"></div><div class="abs" style="left:41.2px;top:20.2px;width:0;height:44.1px;border-left:2px dotted #bdbdbd;opacity:.7"></div><div class="abs" style="left:46.1px;top:49.9px;width:0;height:13.0px;border-left:2px dotted #bdbdbd;opacity:.7"></div><div class="abs" style="left:70.8px;top:19.5px;width:0;height:40.5px;border-left:2px dotted #bdbdbd;opacity:.7"></div><div class="abs" style="left:65.9px;top:47.0px;width:0;height:15.9px;border-left:2px dotted #bdbdbd;opacity:.7"></div><div class="abs" style="left:86.4px;top:32.9px;width:0;height:30.0px;border-left:2px dotted #bdbdbd;opacity:.7"></div><div class="abs" style="left:92.7px;top:47.0px;width:0;height:15.9px;border-left:2px dotted #bdbdbd;opacity:.7"></div><div class="abs" style="left:101.9px;top:19.5px;width:0;height:43.4px;border-left:2px dotted #bdbdbd;opacity:.7"></div><div class="abs" style="left:48.6px;top:26.1px;width:17px;height:17px;border-radius:50%;border:.7px solid #e6e6e6"></div><div class="abs" style="left:53.6px;top:30.6px;width:6px;height:1.1px;background:#c2c2c2"></div><div class="abs" style="left:53.6px;top:33.9px;width:6.6px;height:1.1px;background:#c2c2c2"></div><div class="abs" style="left:53.6px;top:37.2px;width:4px;height:1.1px;background:#c2c2c2"></div><div class="abs" style="left:53.6px;top:40.5px;width:6.4px;height:1.1px;background:#c2c2c2"></div><div class="abs" style="left:53.6px;top:43.8px;width:6px;height:1.1px;background:#c2c2c2"></div></div>
<div class="t ll" style="left:116.9px;top:352.6px">3_Hierrarchy placeholder</div>
<div class="abs lay" style="left:249.9px;top:283.2px"><div class="abs" style="left:104.1px;top:3.6px;width:5px;height:5px;border-radius:50%;background:#d9d9d9"></div><div class="abs" style="left:4.1px;top:4.4px;width:105.0px;height:6.1px;border:.7px solid #e3e3e3"></div><div class="abs" style="left:4.1px;top:10.5px;width:105.0px;height:3.8px;border:.7px solid #e3e3e3"></div><div class="t" style="left:4.1px;top:5.2px;width:105.0px;text-align:center;font-size:5.4px;color:#707070;font-weight:bold;letter-spacing:-0.12px">Click to add title</div><div class="abs" style="left:50.0px;top:11.8px;width:14.0px;height:0.7px;background:#d8d8d8"></div><div class="abs" style="left:1.8px;top:23.9px;width:109px;height:21px;border:.7px solid #e6e6e6"></div><div class="abs" style="left:3.6px;top:34.0px;width:16.0px;height:0.8px;background:#c4c4c4"></div></div>
<div class="t ll" style="left:237.0px;top:352.6px">3_Normal Center</div>
<div class="abs" style="left:391.3px;top:11.5px;width:7.2px;height:184.8px;border-radius:3.6px;background:#dadce0"></div>
</div>
<div class="abs" style="left:845.2px;top:176px;width:5px;height:362px;overflow:hidden"><div class="t" style="left:0px;top:81.8px;font-size:19px;color:#505050">e</div><div class="t" style="left:0.2px;top:264.5px;font-size:21.4px;color:#fff;-webkit-text-stroke:.45px #fff">s</div><div class="t" style="left:0px;top:287.7px;font-size:12.4px;color:#fff">a</div><div class="t" style="left:-1.6px;top:302.3px;font-size:12.4px;color:#fff">le</div><div class="t" style="left:0px;top:316.9px;font-size:12.4px;color:#fff">c</div></div>

</body>
</html>
